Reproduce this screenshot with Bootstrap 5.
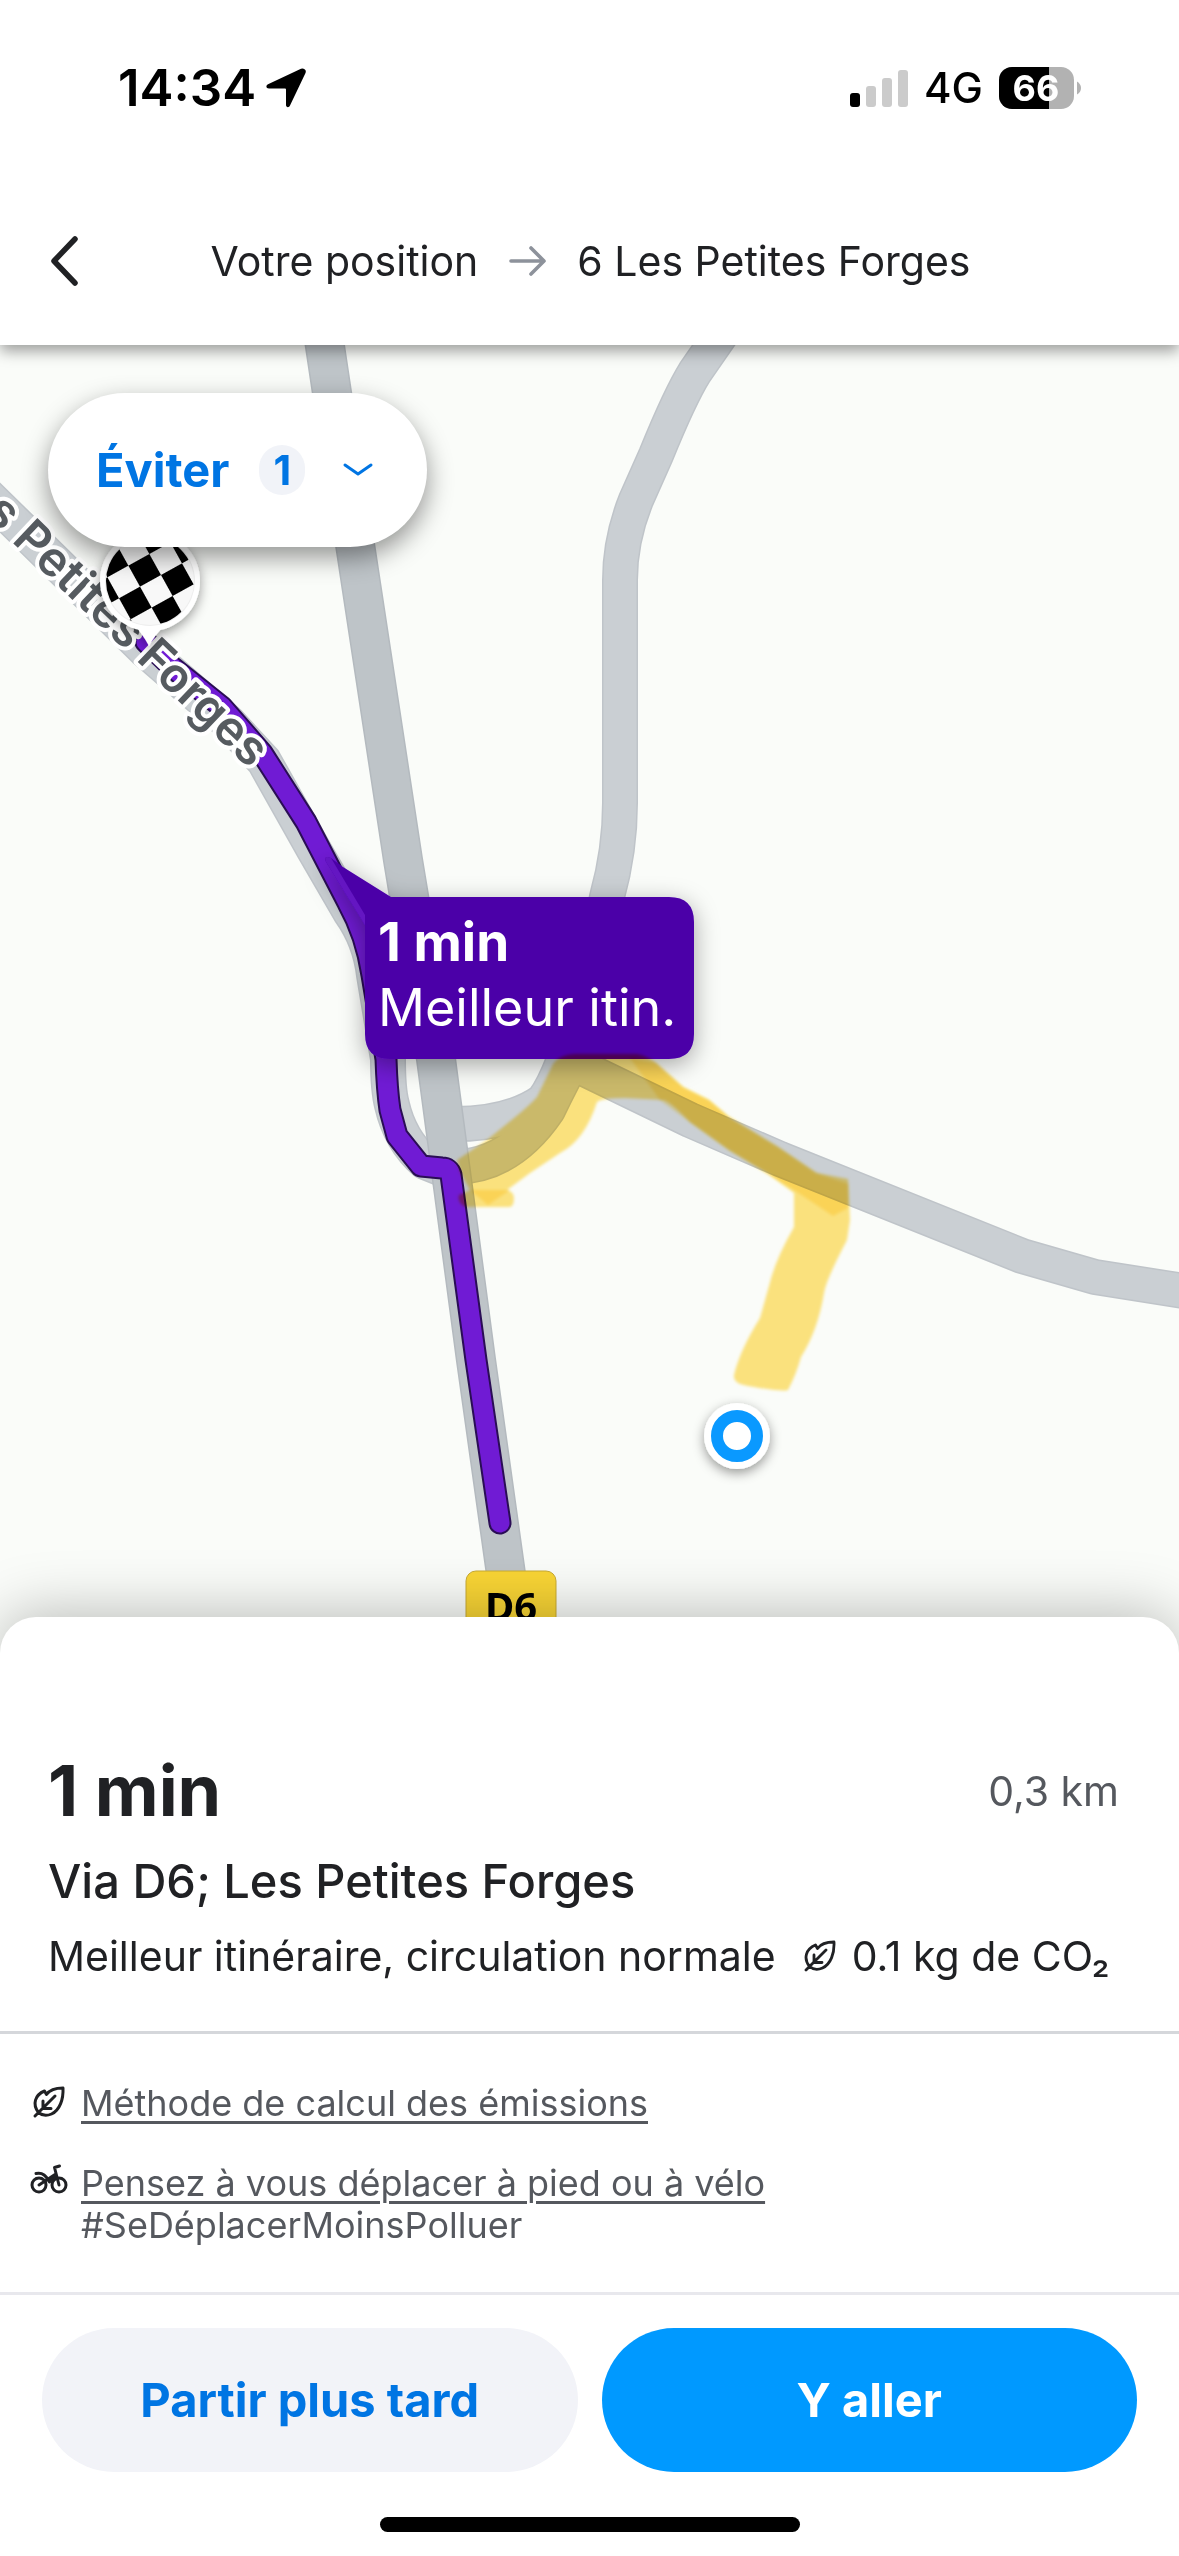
<!DOCTYPE html>
<html lang="fr">
<head>
<meta charset="utf-8">
<meta name="viewport" content="width=device-width, initial-scale=1">
<title>Itinéraire</title>
<link rel="stylesheet" href="https://cdn.jsdelivr.net/npm/bootstrap@5.3.0/dist/css/bootstrap.min.css">
<style>
  body { font-family: Inter, "Liberation Sans", sans-serif; color: #202124; background: #fff; }
  svg { display: block; flex: none; }
  .top-bar { z-index: 2; box-shadow: 0 6px 14px rgba(0,0,0,.38); }
  .status-row { height: 176px; padding: 0 97px 0 118px; }
  .clock { font-size: 51px; font-weight: 600; line-height: 60px; color: #000; }
  .clock-group { gap: 10px; }
  .network { font-size: 42px; font-weight: 500; line-height: 50px; color: #000; }
  .title-row { height: 169px; padding: 0 48px; }
  .trip-title { font-size: 41px; line-height: 50px; gap: 31px; }
  .map-area { background: #fafcf9; }
  .avoid-btn { top: 48px; left: 48px; height: 154px; border-radius: 77px; padding: 0 54px 0 48px; gap: 30px; background: #fff; color: #0075e3; font-size: 47px; font-weight: 700; line-height: 56px; box-shadow: 0 10px 26px rgba(0,0,0,.42); }
  .avoid-btn:hover { background: #fff; color: #0075e3; }
  .avoid-count { width: 46px; height: 50px; border-radius: 25px; background: #f1f3f8; font-size: 41px; line-height: 50px; }
  .sheet { z-index: 1; margin-top: -60px; border-radius: 36px 36px 0 0; background: #fff; box-shadow: 0 -4px 60px rgba(0,0,0,.26); }
  .summary { padding: 132px 48px 50px; border-bottom: 3px solid #d5d7db; }
  .duration { font-size: 70px; font-weight: 700; line-height: 84px; }
  .distance { font-size: 41px; line-height: 50px; color: #55585e; padding-right: 12px; }
  .via { font-size: 47px; font-weight: 500; line-height: 56px; margin-top: 20px; }
  .detail { font-size: 41px; line-height: 50px; margin-top: 22px; gap: 28px; }
  .detail span { white-space: nowrap; }
  .tips { padding: 48px 30px 46px; font-size: 36px; line-height: 42px; color: #55585e; border-bottom: 3px solid #e8e8ed; gap: 38px; }
  .tips a { color: #55585e; text-decoration-thickness: 3px; text-underline-offset: 5px; }
  .tip-row { gap: 12px; }
  .actions { padding: 33px 42px 45px; gap: 24px; }
  .pill-btn { height: 144px; border-radius: 72px; font-size: 47px; font-weight: 700; }
  .pill-later, .pill-later:hover { background: #f2f3f8; color: #0075e3; }
  .pill-go, .pill-go:hover { background: #0099ff; color: #fff; }
  .home-bar { width: 420px; height: 15px; border-radius: 8px; background: #000; margin-bottom: 24px; }
</style>
</head>
<body>
<div class="d-flex flex-column min-vh-100 overflow-hidden">
  <header class="top-bar position-relative bg-white">
    <div class="status-row d-flex justify-content-between align-items-center">
      <div class="clock-group d-flex align-items-center">
        <span class="clock">14:34</span>
        <svg width="40" height="40" viewBox="0 0 40 40"><path d="M38.500 1.200C40 2 40 3.500 39.500 5L24 37.500C23 40 20 39.500 20 37V21.500Q20 20.500 19 20.500H3C0 20.500-.5 17.500 2 16.200L35 .8Q37 0 38.500 1.200Z"/></svg>
      </div>
      <div class="d-flex align-items-center">
        <svg width="58" height="38" viewBox="0 0 58 38"><rect y="24" width="10" height="14" rx="3"/><g fill="#cbcbcb"><rect x="16" y="17" width="10" height="21" rx="3"/><rect x="32" y="9" width="10" height="29" rx="3"/><rect x="48" y="1" width="10" height="37" rx="3"/></g></svg>
        <span class="network mx-3">4G</span>
        <svg width="83" height="42" viewBox="0 0 83 42"><defs><clipPath id="batt"><rect width="75" height="42" rx="13"/></clipPath></defs><g clip-path="url(#batt)"><rect width="75" height="42" fill="#b2b2b2"/><rect width="50" height="42"/></g><path d="M78 14.500Q82 17 82 21T78 27.500Z" fill="#b2b2b2"/><text x="37" y="34" text-anchor="middle" font-size="36" font-weight="700" fill="#fff">66</text></svg>
      </div>
    </div>
    <div class="title-row d-flex align-items-center position-relative">
      <button class="btn p-0 border-0" type="button" aria-label="Retour">
        <svg width="34" height="52" viewBox="0 0 34 52"><path d="M27 4L6 26L27 48" fill="none" stroke="#202124" stroke-width="5.500" stroke-linecap="round" stroke-linejoin="round"/></svg>
      </button>
      <div class="trip-title d-flex flex-grow-1 align-items-center justify-content-center pe-4 me-2">
        <span>Votre position</span>
        <svg width="37" height="30" viewBox="0 0 37 30"><path d="M2 15H34M22 2L35 15L22 28" fill="none" stroke="#8d929b" stroke-width="3.600" stroke-linecap="round" stroke-linejoin="round"/></svg>
        <span>6 Les Petites Forges</span>
      </div>
    </div>
  </header>

  <main class="map-area position-relative flex-grow-1 overflow-hidden">
    <svg class="position-absolute w-100 h-100" viewBox="0 345 1179 1332" preserveAspectRatio="xMidYMin slice">
      <defs>
        <filter id="soft" x="-10%" y="-10%" width="120%" height="120%"><feGaussianBlur stdDeviation="1.500"/></filter>
        <filter id="drop" x="-30%" y="-30%" width="160%" height="160%"><feDropShadow dx="0" dy="4" stdDeviation="6" flood-opacity=".4"/></filter>
        <filter id="dropWide" x="-30%" y="-30%" width="160%" height="170%"><feDropShadow dx="0" dy="6" stdDeviation="12" flood-opacity=".35"/></filter>
        <clipPath id="flagDisc"><circle cx="150" cy="581" r="44"/></clipPath>
        <pattern id="checks" width="48" height="48" patternUnits="userSpaceOnUse" patternTransform="translate(161 575) rotate(-29)"><rect width="48" height="48" fill="#f8f8f8"/><rect width="24" height="24"/><rect x="24" y="24" width="24" height="24"/></pattern>
        <path id="labelPath" d="M-160 376L17 547L143 667L300 817"/>
        <path id="roadA" d="M722 333L695 372Q680 396 656 455L636 500Q620 540 620 580V803Q620 850 607 897Q590 985 563 1062Q553 1088 543 1101Q510 1124 455 1124"/>
        <path id="roadB" d="M582 1045Q562 1080 548 1110Q510 1166 455 1167"/>
        <path id="roadC" d="M566 1060L690 1120L780 1159L1022 1256L1095 1277L1190 1292"/>
        <path id="roadD" d="M-20 488L145 650L228 722L264 761L314 850L350 912Q370 940 374 975L388 1059Q388 1090 392 1105Q400 1140 425 1162L450 1172"/>
        <path id="roadE" d="M323 333L332 393L403 860L436 1059L476 1360L518 1660"/>
        <path id="route" d="M146 642L172 667L222 707L262 753L306 822L348 903Q366 935 372 975L386 1059Q387 1090 390 1110L397 1136L421 1166L442 1168Q449 1168 451 1175L476 1360L500 1523"/>
      </defs>
      <g fill="none" stroke="#bfc4c9" stroke-width="36" stroke-linejoin="round"><use href="#roadA"/><use href="#roadB"/><use href="#roadC"/><use href="#roadD"/></g>
      <g fill="none" stroke="#cacfd3" stroke-width="33" stroke-linejoin="round"><use href="#roadA"/><use href="#roadB"/><use href="#roadC"/><use href="#roadD"/></g>
      <use href="#roadE" fill="none" stroke="#b4babf" stroke-width="40"/>
      <use href="#roadE" fill="none" stroke="#bec4c8" stroke-width="37"/>
      <g fill="none" stroke-linecap="round" stroke-linejoin="round">
        <use href="#route" stroke="#2a0d55" stroke-width="23"/>
        <use href="#route" stroke="#701bd4" stroke-width="19"/>
      </g>
      <text font-size="48" font-weight="600" fill="#565b60" stroke="#fff" stroke-width="8" stroke-linejoin="round" paint-order="stroke" text-anchor="end"><textPath href="#labelPath" startOffset="568">s Petites Forges</textPath></text>
      <g filter="url(#drop)"><circle cx="150" cy="581" r="50" fill="#fff"/><path d="M132 622Q142 633 149 646Q156 633 168 622Z" fill="#fff"/></g>
      <circle cx="150" cy="581" r="45" fill="#eee"/>
      <rect x="100" y="530" width="100" height="96" fill="url(#checks)" clip-path="url(#flagDisc)"/>

      <g filter="url(#dropWide)">
        <path d="M391 897H669Q694 897 694 922V1034Q694 1059 669 1059H390Q365 1059 365 1034V925L326 862Q323 855 331 858L343 867Z" fill="#4c00a8"/>
      </g>
      <path d="M326 862Q323 855 331 858L365 915V925Z" fill="#6416c2"/>
      <text x="378" y="961" font-size="53" font-weight="700" fill="#fff">1 min</text>
      <text x="378" y="1026" font-size="52" fill="#fff">Meilleur itin.</text>

      <g style="mix-blend-mode:multiply" filter="url(#soft)">
        <path fill="#ffe480" d="M457 1160L487 1140L514 1118Q530 1105 537 1097L553 1064Q560 1054 575 1054H637Q648 1056 656 1063L683 1087L709 1100L729 1117L778 1147L817 1173L848 1179L850 1220L847 1240Q826 1280 824 1293Q818 1330 801 1357Q796 1375 788 1390Q782 1392 748 1386Q733 1384 734 1375Q740 1350 760 1318L769 1286Q775 1260 794 1227V1193L767 1173L729 1150L690 1122Q672 1103 664 1100L625 1098Q602 1098 597 1102Q585 1140 560 1153L530 1173L507 1190Q514 1192 514 1198Q514 1207 509 1207H465Q457 1202 459 1195L470 1190L460 1172Z"/>
      </g>
      <g style="mix-blend-mode:multiply" filter="url(#soft)" fill="#fff0b0">
        <path d="M630 1058L656 1063L683 1087L709 1100L729 1117L778 1147L815 1173L848 1184V1208L833 1216L794 1190L729 1150L690 1122L660 1100Z"/>
        <path d="M470 1190H510L488 1205Z"/>
      </g>

      <g filter="url(#drop)"><circle cx="737" cy="1436" r="33" fill="#fff"/></g>
      <circle cx="737" cy="1436" r="20" fill="#fff" stroke="#0a99ff" stroke-width="12"/>
      <rect x="466" y="1571" width="90" height="90" rx="10" fill="#f9d535" stroke="#c9ab35" stroke-width="1"/>
      <text x="511" y="1621" text-anchor="middle" font-family="Noto Sans, sans-serif" font-size="40" font-weight="700">D6</text>
    </svg>
    <button class="avoid-btn btn border-0 position-absolute d-flex align-items-center" type="button" aria-expanded="false">
      <span>Éviter</span>
      <span class="avoid-count text-center">1</span>
      <svg class="ms-2" width="30" height="16" viewBox="0 0 30 16"><path d="M2 3L15 12L28 3" fill="none" stroke="#0075e3" stroke-width="3" stroke-linecap="round" stroke-linejoin="round"/></svg>
    </button>
  </main>

  <section class="sheet position-relative">
    <div class="summary">
      <div class="d-flex justify-content-between align-items-center">
        <h1 class="duration m-0">1 min</h1>
        <span class="distance">0,3 km</span>
      </div>
      <div class="via">Via D6; Les Petites Forges</div>
      <div class="detail d-flex">
        <span>Meilleur itinéraire, circulation normale</span>
        <span class="d-flex align-items-center gap-3">
          <svg width="32" height="32" viewBox="0 0 32 32" fill="none" stroke="#202124" stroke-width="2.800" stroke-linecap="round" stroke-linejoin="round"><path id="leaf" d="M2 30L22 10M10 15V22M9.500 22.500H18M5.500 26.500C-1 18 2 9 11.500 5L13.500 8.500C17 3.500 23 2 30 2C30.500 13 27 24 18.500 28C14 30 9 29.500 5.500 26.500Z"/></svg>
          <span>0.1 kg de CO₂</span>
        </span>
      </div>
    </div>
    <div class="tips d-flex flex-column">
      <div class="tip-row d-flex">
        <svg class="mt-1" width="39" height="34" viewBox="-3 0 39 34" fill="none" stroke="#202124" stroke-width="3" stroke-linecap="round" stroke-linejoin="round"><use href="#leaf"/></svg>
        <a href="#">Méthode de calcul des émissions</a>
      </div>
      <div class="tip-row d-flex">
        <svg width="39" height="34" viewBox="0 0 39 34" fill="none" stroke="#202124" stroke-width="3" stroke-linecap="round" stroke-linejoin="round"><circle cx="9" cy="23" r="7"/><circle cx="29" cy="23" r="7"/><path d="M9 23L25 12.500M6 11.500C13 10 16 14 19.500 20L26 13M29 23L24.500 5.500L29.500 4"/></svg>
        <div><a href="#">Pensez à vous déplacer à pied ou à vélo</a><br>#SeDéplacerMoinsPolluer</div>
      </div>
    </div>
    <div class="actions d-flex">
      <button class="btn pill-btn pill-later border-0 flex-fill w-50" type="button">Partir plus tard</button>
      <button class="btn pill-btn pill-go border-0 flex-fill w-50" type="button">Y aller</button>
    </div>
    <div class="home-bar mx-auto"></div>
  </section>
</div>
<script src="https://cdn.jsdelivr.net/npm/bootstrap@5.3.0/dist/js/bootstrap.bundle.min.js"></script>
</body>
</html>
